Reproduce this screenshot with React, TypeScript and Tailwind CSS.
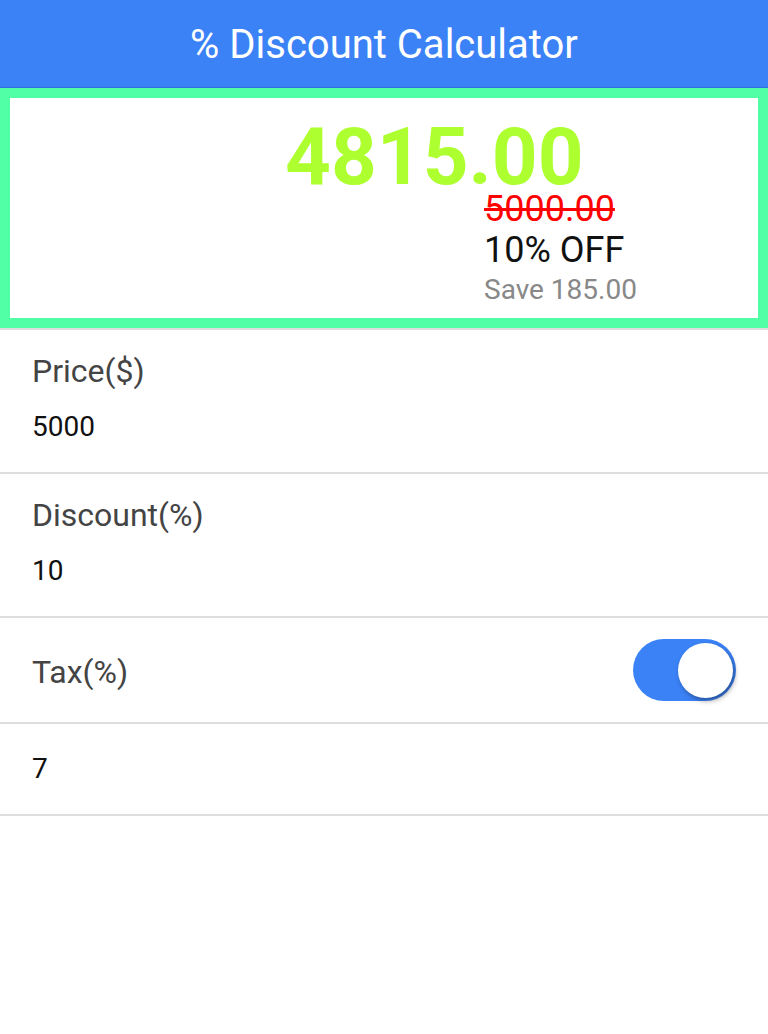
const Field = ({ label, value }: { label: string; value: string }) => {
  return (
    <div className="border-b-2 border-[#dddddd] pt-[21px] pb-[25px] px-[32px]">
      <div className="text-[32px] leading-[40px] text-[#444444]">{label}</div>
      <div className="mt-[16px] text-[28px] leading-[40px] text-[#111111]">{value}</div>
    </div>
  );
};

export default function App() {
  return (
    <div className="min-h-[1034px] bg-white font-['Roboto',sans-serif]">
      <header className="h-[88px] bg-[#3b82f6] border-b border-[#2f6fe0] flex items-center justify-center">
        <h1 className="text-[40px] leading-[48px] text-white pt-[2px]">% Discount Calculator</h1>
      </header>

      <div className="border-[10px] border-[#50ffa6]">
        <div className="h-[220px] bg-white pt-[27px]">
          <div className="pl-[275px] text-[80px] leading-[64px] font-bold text-[#adff2f]">4815.00</div>
          <div className="pl-[474px]">
            <div className="text-[36px] leading-[40px] text-[#ff0000] line-through">5000.00</div>
            <div className="mt-[1px] text-[36px] leading-[40px] text-[#111111]">10% OFF</div>
            <div className="mt-[1px] text-[28px] leading-[38px] text-[#888888]">Save 185.00</div>
          </div>
        </div>
      </div>

      <div className="border-t-2 border-[#dddddd]">
        <Field label="Price($)" value="5000" />
        <Field label="Discount(%)" value="10" />

        <div className="h-[106px] border-b-2 border-[#dddddd] flex items-center justify-between pl-[32px] pr-[32px]">
          <div className="pt-[4px] text-[32px] leading-[40px] text-[#444444]">Tax(%)</div>
          <div className="w-[103px] h-[62px] rounded-full bg-[#3b82f6] flex items-center justify-end pr-[3px]">
            <div className="w-[55px] h-[55px] rounded-full bg-white shadow-[2px_3px_5px_rgba(0,0,0,0.35)]" />
          </div>
        </div>

        <div className="h-[92px] border-b-2 border-[#dddddd] flex items-center px-[32px]">
          <div className="text-[28px] leading-[40px] text-[#111111]">7</div>
        </div>
      </div>
    </div>
  );
}
